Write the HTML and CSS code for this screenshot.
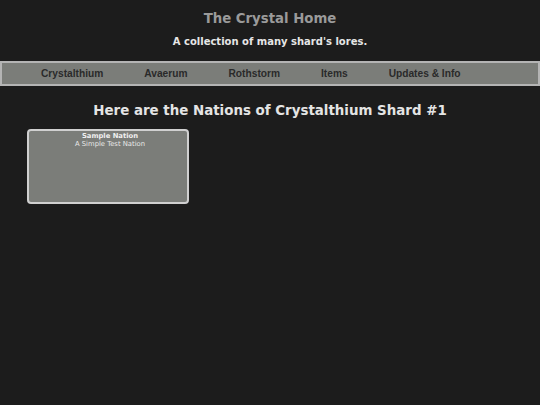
FILE: index.html
```html
<!DOCTYPE html>
<html>
<head>
<meta charset="utf-8">
<link rel="stylesheet" href="styles.css">
</head>
<body>
<header class="site-header">
  <h1 class="site-title">The Crystal Home</h1>
  <p class="site-tagline">A collection of many shard's lores.</p>
</header>
<nav class="nav-bar">
  <a class="nav-link" href="#">Crystalthium</a>
  <a class="nav-link" href="#">Avaerum</a>
  <a class="nav-link" href="#">Rothstorm</a>
  <a class="nav-link" href="#">Items</a>
  <a class="nav-link" href="#">Updates &amp; Info</a>
</nav>
<main class="content">
  <h2 class="page-heading">Here are the Nations of Crystalthium Shard #1</h2>
  <div class="card-grid">
    <div class="nation-card">
      <div class="nation-name">Sample Nation</div>
      <div class="nation-desc">A Simple Test Nation</div>
    </div>
  </div>
</main>
</body>
</html>
```

FILE: styles.css
```css
html, body {
  margin: 0;
  padding: 0;
  background: #1c1c1c;
  font-family: "DejaVu Sans", Verdana, sans-serif;
}
.site-header {
  text-align: center;
  padding-top: 10px;
}
.site-title {
  margin: 0;
  font-size: 13.3px;
  line-height: 18px;
  color: #9a9a9a;
  font-weight: bold;
}
.site-tagline {
  margin: 7px 0 0;
  font-size: 10px;
  line-height: 14px;
  color: #e6e6e6;
  font-weight: bold;
}
.nav-bar {
  margin-top: 12px;
  display: flex;
  gap: 41px;
  align-items: center;
  height: 21px;
  padding-left: 39px;
  background: #7b7d79;
  border: 2px solid #b4b4b4;
}
.nav-link {
  font-family: "Liberation Sans", Arial, sans-serif;
  font-weight: bold;
  font-size: 10.2px;
  color: #2a2a2a;
  text-decoration: none;
}
.content {
  padding: 0 27px;
}
.page-heading {
  margin: 16px 0 0;
  text-align: center;
  font-size: 13.4px;
  line-height: 18px;
  color: #e4e4e4;
}
.card-grid {
  margin-top: 9px;
  display: flex;
}
.nation-card {
  box-sizing: border-box;
  width: 162px;
  height: 75px;
  background: #7b7d79;
  border: 2px solid #d0d0d0;
  border-radius: 4px;
  text-align: center;
  padding: 1px 0 0 4px;
}
.nation-name {
  font-size: 6.8px;
  font-weight: bold;
  line-height: 8px;
  color: #f0f0f0;
}
.nation-desc {
  font-size: 6.8px;
  line-height: 8px;
  color: #e8e8e8;
}
```
